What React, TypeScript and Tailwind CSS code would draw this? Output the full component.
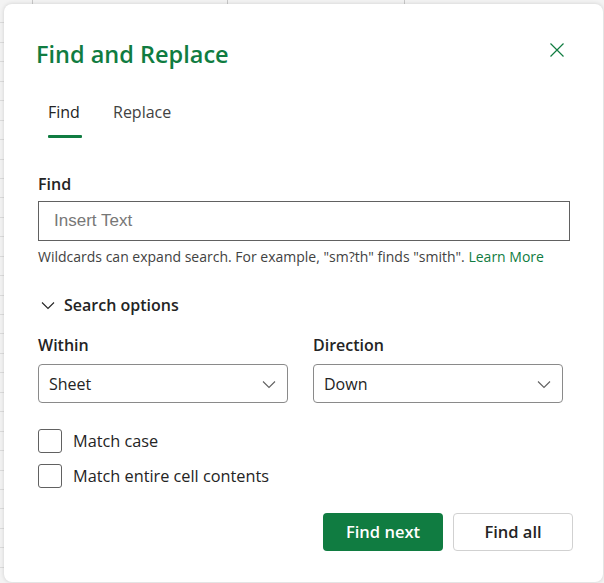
import React from 'react';

const font = { fontFamily: '"Open Sans", "Noto Sans", sans-serif' };

function Chevron({ className }: { className?: string }) {
  return (
    <svg viewBox="0 0 16 16" className={className} fill="none" stroke="currentColor" strokeWidth="1.1">
      <path d="M2 5.5l6 6 6-6" />
    </svg>
  );
}

function SelectBox({ value }: { value: string }) {
  return (
    <div className="h-[39px] border border-[#8a8a8a] rounded-[4px] flex items-center justify-between pl-[10px] pr-[10px] text-[16px] text-[#242424]">
      <span>{value}</span>
      <Chevron className="w-[16px] h-[16px] text-[#616161]" />
    </div>
  );
}

function Check({ label }: { label: string }) {
  return (
    <label className="flex items-center gap-[11px] h-[24px] text-[16.3px] text-[#242424]">
      <span className="w-[24px] h-[24px] border border-[#616161] rounded-[3px] bg-white" />
      {label}
    </label>
  );
}

export default function App() {
  return (
    <div className="relative w-[604px] h-[583px] overflow-hidden bg-[#f3f3f3]" style={font}>
      {/* sheet behind */}
      <div className="absolute left-0 top-0 w-full h-[4px] flex">
        <div className="w-[33px] border-r border-[#c8c8c8]" />
        <div className="w-[195px] border-r border-[#c8c8c8]" />
        <div className="w-[177px] border-r border-[#c8c8c8]" />
      </div>
      <div className="absolute left-0 top-[4px] w-[4px] h-full flex flex-col">
        {Array.from({ length: 30 }).map((_, i) => (
          <div key={i} className="h-[20px] border-b border-[#dcdcdc]" />
        ))}
      </div>

      {/* dialog */}
      <div className="absolute left-[4px] top-[4px] w-[599px] h-[578px] bg-white rounded-[8px] shadow-[0_0_4px_rgba(0,0,0,0.15)]">
        <div className="pl-[32px] pr-[36px] pt-[34px] flex items-start justify-between">
          <h1 className="text-[23.5px] font-semibold text-[#107c41] leading-[32px]">Find and Replace</h1>
          <button className="mt-[2px] mr-[-2px] w-[20px] h-[20px] text-[#107c41]">
            <svg viewBox="0 0 16 16" className="w-[16px] h-[16px]" fill="none" stroke="currentColor" strokeWidth="1.2">
              <path d="M1.5 1.5l13 13M14.5 1.5l-13 13" />
            </svg>
          </button>
        </div>

        <div className="pl-[44px] mt-[30px] flex gap-[31px] text-[16px] text-[#424242]">
          <div className="flex flex-col items-start">
            <span className="leading-[24px] text-[#242424]">Find</span>
            <span className="mt-[11px] w-[34px] h-[3px] bg-[#107c41] rounded-[1px]" />
          </div>
          <span className="leading-[24px]">Replace</span>
        </div>

        <div className="pl-[34px] pr-[33px] mt-[34px]">
          <div className="text-[16px] font-semibold text-[#242424] leading-[24px]">Find</div>
          <div className="mt-[5px] h-[40px] border border-[#616161] flex items-center pl-[15px] text-[17px] text-[#777]" style={{ fontFamily: '"Liberation Sans", Arial, sans-serif' }}>
            Insert Text
          </div>
          <p className="mt-[6px] text-[14px] text-[#424242] leading-[20px] whitespace-nowrap">
            Wildcards can expand search. For example, "sm?th" finds "smith". <span className="text-[#107c41]">Learn More</span>
          </p>

          <div className="mt-[26px] flex items-center gap-[8px] text-[16px] font-semibold text-[#242424] leading-[24px]">
            <Chevron className="w-[16px] h-[16px] ml-[2px] text-[#242424]" />
            Search options
          </div>

          <div className="mt-[16px] flex gap-[25px]">
            <div className="w-[250px]">
              <div className="text-[16px] font-semibold text-[#242424] leading-[24px] mb-[7px]">Within</div>
              <SelectBox value="Sheet" />
            </div>
            <div className="w-[250px]">
              <div className="text-[16px] font-semibold text-[#242424] leading-[24px] mb-[7px]">Direction</div>
              <SelectBox value="Down" />
            </div>
          </div>

          <div className="mt-[26px] flex flex-col gap-[11px]">
            <Check label="Match case" />
            <Check label="Match entire cell contents" />
          </div>

          <div className="mt-[25px] flex justify-end gap-[10px] mr-[-3px]">
            <button className="w-[120px] h-[38px] rounded-[4px] bg-[#107c41] text-white text-[16.5px] font-semibold">Find next</button>
            <button className="w-[120px] h-[38px] rounded-[4px] bg-white border border-[#d1d1d1] text-[#242424] text-[16.5px] font-semibold">Find all</button>
          </div>
        </div>
      </div>
    </div>
  );
}
